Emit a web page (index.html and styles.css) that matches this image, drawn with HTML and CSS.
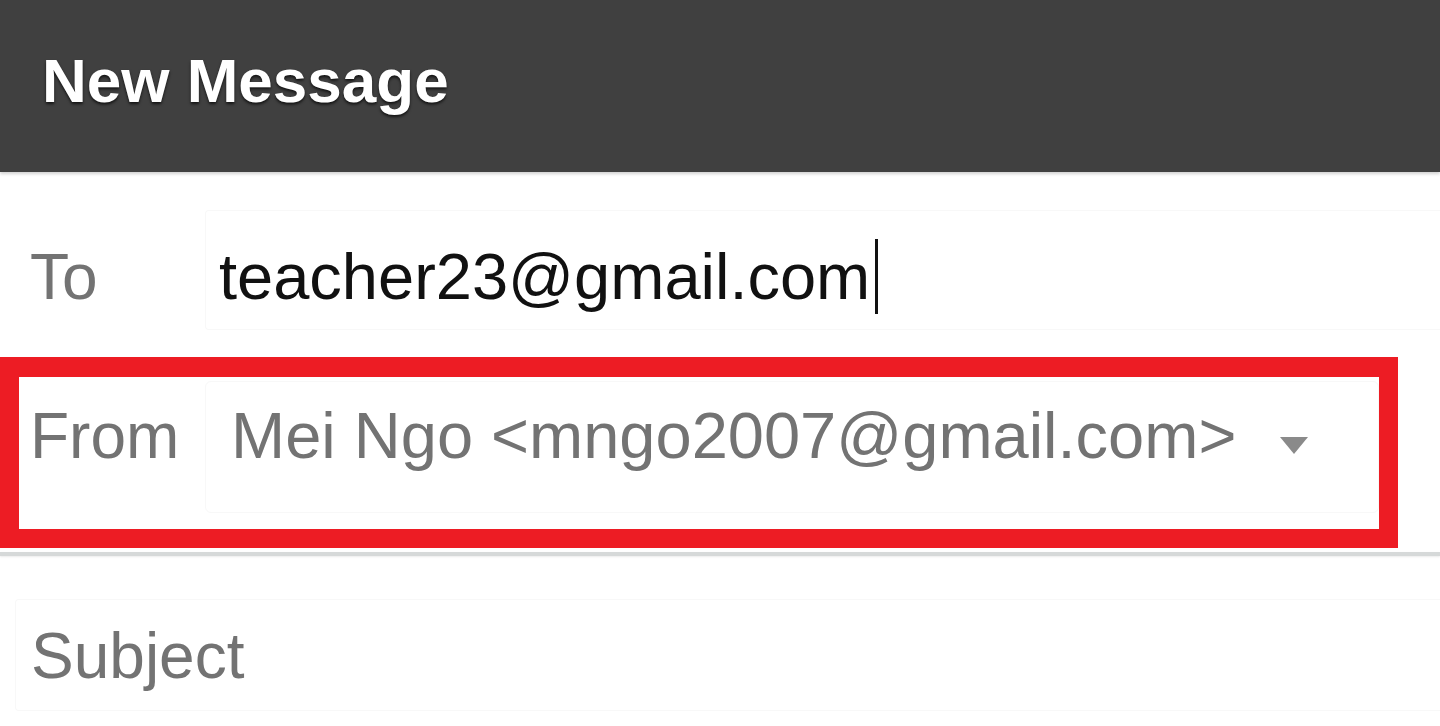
FILE: index.html
```html
<!DOCTYPE html>
<html lang="en">
<head>
<meta charset="utf-8">
<title>New Message</title>
<link rel="stylesheet" href="styles.css">
</head>
<body>
<div class="compose">
  <header class="titlebar">
    <h1 class="title">New Message</h1>
  </header>

  <div class="row row-to">
    <span class="label">To</span>
    <div class="field to-field">
      <span class="to-text">teacher23@gmail.com</span><span class="caret"></span>
    </div>
  </div>

  <div class="row row-from">
    <span class="label">From</span>
    <div class="field from-field">
      <span class="from-text">Mei Ngo &lt;mngo2007@gmail.com&gt;</span>
      <svg class="arrow" width="30" height="20" viewBox="0 0 30 20" aria-hidden="true">
        <path d="M1 2 L29 2 L15 19 Z" fill="#8a8a8a"/>
      </svg>
    </div>
  </div>

  <div class="divider"></div>

  <div class="subject-field">
    <span class="subject-text">Subject</span>
  </div>
</div>
</body>
</html>
```

FILE: styles.css
```css
html, body {
  margin: 0;
  padding: 0;
  background: #ffffff;
}

body {
  font-family: "Liberation Sans", Arial, sans-serif;
  width: 1440px;
  height: 726px;
  overflow: hidden;
}

.compose {
  display: flex;
  flex-direction: column;
}

.titlebar {
  height: 172px;
  box-sizing: border-box;
  background: #404040;
  padding: 50px 0 0 42px;
  box-shadow: 0 2px 3px rgba(0, 0, 0, 0.18);
  position: relative;
  z-index: 1;
}

.title {
  margin: 0;
  font-size: 62px;
  line-height: 62px;
  font-weight: bold;
  color: #ffffff;
  text-shadow: 0 2px 3px rgba(0, 0, 0, 0.7);
}

.row {
  display: flex;
  align-items: baseline;
}

.label {
  width: 175px;
  flex: none;
  font-size: 64px;
  line-height: 64px;
  color: #737373;
}

.field {
  box-sizing: border-box;
  display: flex;
  align-items: flex-start;
  font-size: 65px;
  line-height: 64px;
}

.row-to {
  margin-top: 38px;
  padding-left: 30px;
}

.to-field {
  width: 1235px;
  height: 120px;
  padding: 34px 0 0 13px;
  border: 1px solid #f8f8f8;
  border-right: none;
  border-radius: 4px 0 0 4px;
  color: #111111;
}

.caret {
  display: block;
  width: 3px;
  height: 75px;
  margin: -6px 0 0 5px;
  background: #111111;
}

.row-from {
  margin-top: 27px;
  width: 1398px;
  height: 191px;
  box-sizing: border-box;
  border: 19px solid #ed1c24;
  border-top-width: 20px;
  padding: 4px 0 0 11px;
}

.from-field {
  flex: 1;
  height: 132px;
  padding: 22px 0 0 25px;
  border: 1px solid #f8f8f8;
  border-radius: 6px;
  color: #737373;
}

.arrow {
  flex: none;
  margin: 31px 0 0 43px;
}

.divider {
  margin-top: 4px;
  height: 4px;
  background: #d6d9d9;
  box-shadow: 0 1px 2px rgba(0, 0, 0, 0.08);
}

.subject-field {
  margin: 43px 0 0 15px;
  height: 112px;
  box-sizing: border-box;
  padding: 24px 0 0 15px;
  border: 1px solid #f8f8f8;
  border-right: none;
  border-radius: 4px 0 0 4px;
}

.subject-text {
  font-size: 64px;
  line-height: 64px;
  color: #737373;
}
```
